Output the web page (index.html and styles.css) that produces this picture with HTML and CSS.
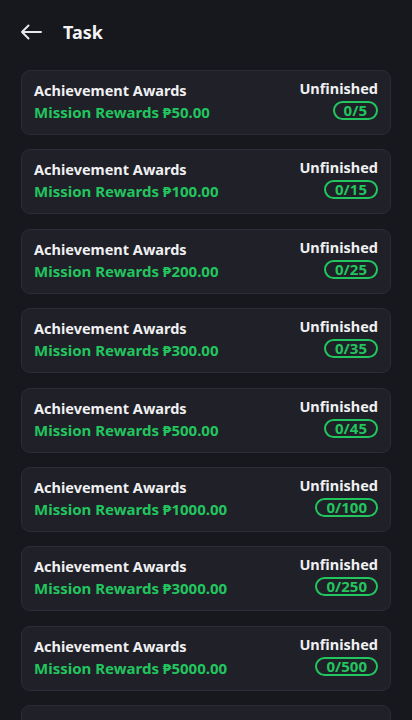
FILE: index.html
```html
<!DOCTYPE html>
<html lang="en">

<head>
    <meta charset="UTF-8">
    <meta name="viewport" content="width=device-width, initial-scale=1.0">
    <title>Task</title>
    <link rel="stylesheet" href="styles.css">
</head>

<body>
    <div class="header">
        <svg class="back" width="22" height="16" viewBox="0 0 22 16">
            <path d="M21 8H2M8.5 1.5L2 8l6.5 6.5" fill="none" stroke="#e8e8ea" stroke-width="2" stroke-linecap="round" stroke-linejoin="round"/>
        </svg>
        <h1>Task</h1>
    </div>

    <div class="list">
        <div class="card">
            <div class="left">
                <div class="title">Achievement Awards</div>
                <div class="reward">Mission Rewards ₱50.00</div>
            </div>
            <div class="right">
                <div class="status">Unfinished</div>
                <div class="badge">0/5</div>
            </div>
        </div>
        <div class="card">
            <div class="left">
                <div class="title">Achievement Awards</div>
                <div class="reward">Mission Rewards ₱100.00</div>
            </div>
            <div class="right">
                <div class="status">Unfinished</div>
                <div class="badge">0/15</div>
            </div>
        </div>
        <div class="card">
            <div class="left">
                <div class="title">Achievement Awards</div>
                <div class="reward">Mission Rewards ₱200.00</div>
            </div>
            <div class="right">
                <div class="status">Unfinished</div>
                <div class="badge">0/25</div>
            </div>
        </div>
        <div class="card">
            <div class="left">
                <div class="title">Achievement Awards</div>
                <div class="reward">Mission Rewards ₱300.00</div>
            </div>
            <div class="right">
                <div class="status">Unfinished</div>
                <div class="badge">0/35</div>
            </div>
        </div>
        <div class="card">
            <div class="left">
                <div class="title">Achievement Awards</div>
                <div class="reward">Mission Rewards ₱500.00</div>
            </div>
            <div class="right">
                <div class="status">Unfinished</div>
                <div class="badge">0/45</div>
            </div>
        </div>
        <div class="card">
            <div class="left">
                <div class="title">Achievement Awards</div>
                <div class="reward">Mission Rewards ₱1000.00</div>
            </div>
            <div class="right">
                <div class="status">Unfinished</div>
                <div class="badge">0/100</div>
            </div>
        </div>
        <div class="card">
            <div class="left">
                <div class="title">Achievement Awards</div>
                <div class="reward">Mission Rewards ₱3000.00</div>
            </div>
            <div class="right">
                <div class="status">Unfinished</div>
                <div class="badge">0/250</div>
            </div>
        </div>
        <div class="card">
            <div class="left">
                <div class="title">Achievement Awards</div>
                <div class="reward">Mission Rewards ₱5000.00</div>
            </div>
            <div class="right">
                <div class="status">Unfinished</div>
                <div class="badge">0/500</div>
            </div>
        </div>
        <!-- next card only peeks in at the bottom edge -->
        <div class="card"></div>
    </div>
</body>

</html>
```

FILE: styles.css
```css
body {
    font-family: 'Noto Sans', 'Open Sans', sans-serif;
    margin: 0;
    background-color: #17181d;
    color: #f2f2f4;
    height: 720px;
    overflow: hidden;
}

.header {
    display: flex;
    align-items: center;
    height: 64px;
    padding: 0 20px;
    box-sizing: border-box;
}

.back {
    display: block;
    margin-right: 21px;
}

h1 {
    margin: 0;
    font-size: 18px;
    font-weight: 700;
    color: #f4f4f6;
}

.list {
    display: flex;
    flex-direction: column;
    gap: 14.4px;
    padding: 6px 21px 0 21px;
}

.card {
    display: flex;
    flex-shrink: 0;
    justify-content: space-between;
    height: 65px;
    box-sizing: border-box;
    padding: 8px 12px 0 12px;
    background-color: #1f2028;
    border: 1px solid #2b2c35;
    border-radius: 9px;
}

.title {
    font-size: 14.5px;
    font-weight: 700;
    line-height: 22px;
    color: #f0f0f2;
}

.reward {
    font-size: 15px;
    font-weight: 700;
    line-height: 22px;
    color: #22c55e;
}

.right {
    display: flex;
    flex-direction: column;
    align-items: flex-end;
}

.status {
    font-size: 14.5px;
    font-weight: 700;
    line-height: 20px;
    margin-top: -1px;
    color: #f0f0f2;
}

.badge {
    margin-top: 3px;
    padding: 0 9px;
    text-align: center;
    font-size: 15px;
    font-weight: 700;
    line-height: 15px;
    color: #22c55e;
    border: 2px solid #22c55e;
    border-radius: 10px;
}
```
